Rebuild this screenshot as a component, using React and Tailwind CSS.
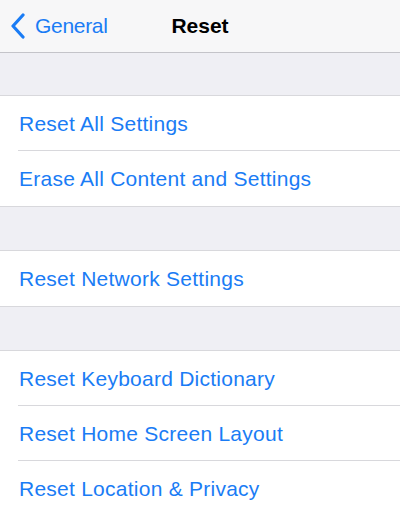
import React from "react";

const Row = ({ label, last }) => (
  <div className="flex h-[55px] items-center pl-[19px] relative">
    <span className="text-[21px] text-[#1a7cf5] tracking-[0.25px]">{label}</span>
    {!last && <div className="absolute bottom-0 left-[18px] right-0 h-px bg-[#d8d8dc]" />}
  </div>
);

const Group = ({ items }) => (
  <div className="bg-white border-y border-[#d8d8dc]">
    {items.map((t, i) => (
      <Row key={t} label={t} last={i === items.length - 1} />
    ))}
  </div>
);

export default function App() {
  return (
    <div
      className="w-[400px] h-[516px] overflow-hidden bg-[#efeff4]"
      style={{ fontFamily: '"Liberation Sans", Arial, sans-serif' }}
    >
      <div className="relative h-[53px] bg-[#f7f7f8] border-b border-[#c4c4c9] flex items-center">
        <div className="flex items-center pl-[10px] gap-[9px]">
          <svg width="16" height="26" viewBox="0 0 16 26" fill="none">
            <path d="M13 2 L3 13 L13 24" stroke="#1a7cf5" strokeWidth="3.2" strokeLinecap="round" strokeLinejoin="round" />
          </svg>
          <span className="text-[21px] text-[#1a7cf5] tracking-[-0.3px]">General</span>
        </div>
        <span className="absolute left-0 right-0 text-center text-[21px] font-bold text-black">Reset</span>
      </div>
      <div className="h-[42px]" />
      <Group items={["Reset All Settings", "Erase All Content and Settings"]} />
      <div className="h-[43px]" />
      <Group items={["Reset Network Settings"]} />
      <div className="h-[43px]" />
      <Group items={["Reset Keyboard Dictionary", "Reset Home Screen Layout", "Reset Location & Privacy"]} />
    </div>
  );
}
